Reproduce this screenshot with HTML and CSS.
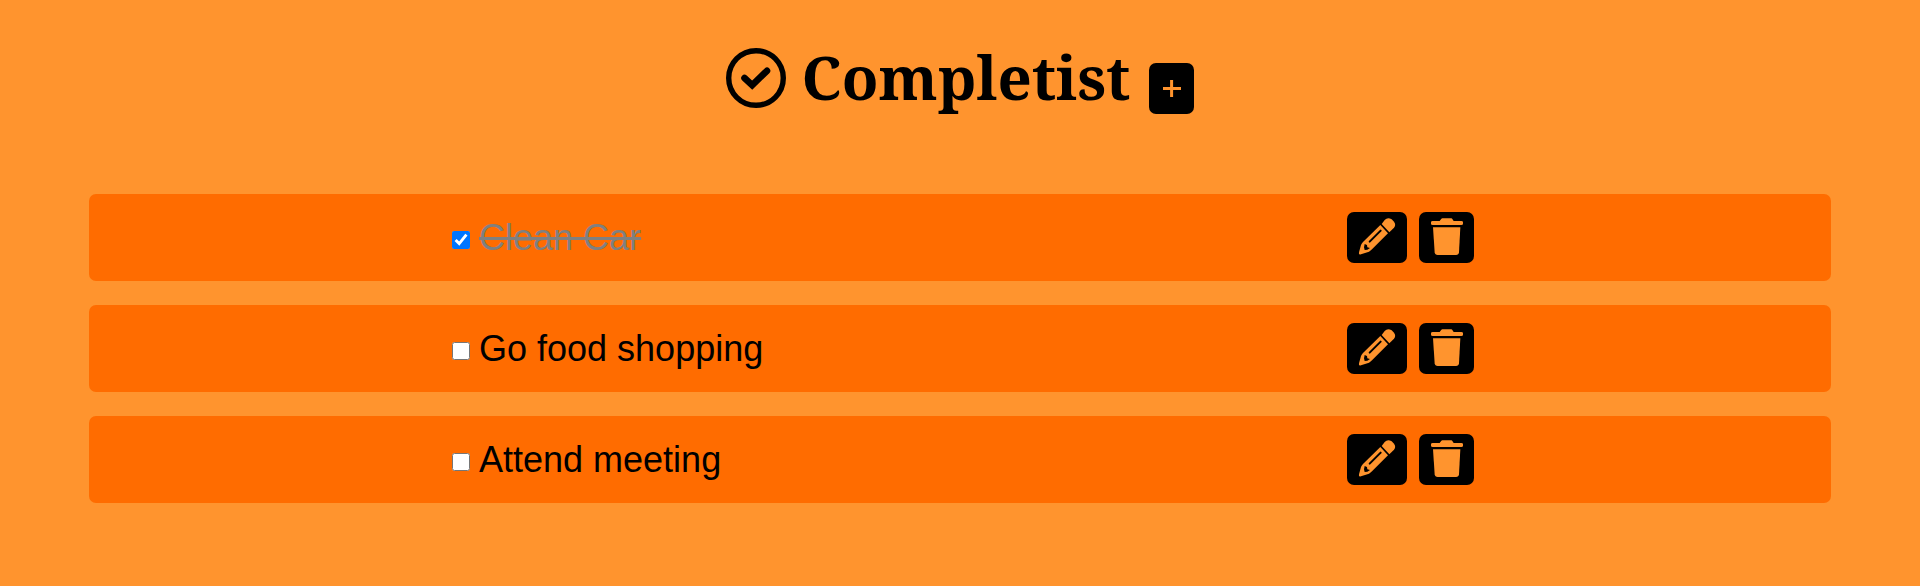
FILE: index.html
```html
<!DOCTYPE html>
<html lang="en">
<head>
<meta charset="utf-8">
<title>Completist</title>
<link rel="stylesheet" href="styles.css">
</head>
<body>
<svg class="defs" width="0" height="0">
  <symbol id="pencil" viewBox="0 0 180 153">
    <path class="fill" d="M104 36 113 24Q122 14 134 22L141 29Q148 38 141 47L127 61Z"/>
    <path class="fill" d="M100 39 123 64 75 112Q71 116 66 119L42 127Q34 130 36 121L42 99Q44 94 48 90Z"/>
    <path class="slot" d="M101 56 68 89"/>
    <path class="cut" d="M53 96 60 99 61 106 69 108 61 113 53 114 51 106Z"/>
  </symbol>
  <symbol id="trash" viewBox="0 0 165 153">
    <path class="fill" d="M41 27H62L67 20Q68 19 70 19H97Q99 19 100 21L104 27H127Q132 27 132 31V35Q132 39 127 39H41Q36 39 36 35V31Q36 27 41 27Z"/>
    <path class="fill" d="M42 46H124L120 121Q119 129 111 129H56Q48 129 47 121Z"/>
  </symbol>
</svg>
<header class="header">
  <svg class="logo" viewBox="0 0 60 60">
    <circle cx="30" cy="30" r="27.3"/>
    <path d="M18.5 30 26.2 37.2 41 22.8"/>
  </svg>
  <h1 class="title">Completist</h1>
  <button class="btn add" aria-label="Add task"><svg viewBox="0 0 18 17"><path d="M8.6 0V17M0 8.5H18"/></svg></button>
</header>
<main class="list">
  <div class="item">
    <label class="task done"><input type="checkbox" checked><span>Clean Car</span></label>
    <div class="actions">
      <button class="btn edit" aria-label="Edit"><svg><use href="#pencil"/></svg></button>
      <button class="btn delete" aria-label="Delete"><svg><use href="#trash"/></svg></button>
    </div>
  </div>
  <div class="item">
    <label class="task"><input type="checkbox"><span>Go food shopping</span></label>
    <div class="actions">
      <button class="btn edit" aria-label="Edit"><svg><use href="#pencil"/></svg></button>
      <button class="btn delete" aria-label="Delete"><svg><use href="#trash"/></svg></button>
    </div>
  </div>
  <div class="item">
    <label class="task"><input type="checkbox"><span>Attend meeting</span></label>
    <div class="actions">
      <button class="btn edit" aria-label="Edit"><svg><use href="#pencil"/></svg></button>
      <button class="btn delete" aria-label="Delete"><svg><use href="#trash"/></svg></button>
    </div>
  </div>
</main>
</body>
</html>
```
FILE: styles.css
```css
* { box-sizing: border-box; }
body {
  margin: 0;
  background: #ff942e;
  color: #000;
  font-family: "Liberation Sans", Arial, sans-serif;
}
.defs { display: block; }
.header {
  display: flex;
  align-items: flex-start;
  height: 194px;
  padding: 47px 0 0 726px;
}
.logo { width: 60px; height: 60px; margin-top: .5px; flex: none; }
.logo circle { fill: none; stroke: #000; stroke-width: 5.4; }
.logo path { fill: none; stroke: #000; stroke-width: 6.6; stroke-linecap: round; }
.title {
  width: 347.5px;
  margin: -11px 0 0 15.5px;
  font: bold 60px/82px "Noto Serif", "Droid Serif", "DejaVu Serif", serif;
  white-space: nowrap;
}
.btn {
  display: flex;
  align-items: center;
  justify-content: center;
  height: 51px;
  padding: 0;
  border: 0;
  border-radius: 7px;
  background: #000;
}
.btn svg { display: block; width: 100%; height: 100%; }
.add { width: 45px; margin-top: 16px; padding: 0 0 1px 1px; }
.add svg { width: 18px; height: 17px; }
.add path { stroke: #ff942e; stroke-width: 3; }
.list {
  display: flex;
  flex-direction: column;
  gap: 24px;
  padding: 0 89px;
}
.item {
  display: flex;
  align-items: flex-start;
  justify-content: space-between;
  height: 87px;
  padding: 18px 357px 0 363px;
  border-radius: 7px;
  background: #ff6c00;
}
.task { display: flex; align-items: flex-start; font-size: 36px; line-height: 51px; }
.task input { width: 18px; height: 18px; margin: 19px 9px 0 0; }
.done span { color: gray; text-decoration: line-through; }
.actions { display: flex; gap: 12px; }
.edit { width: 60px; }
.delete { width: 55px; }
.fill { fill: #ff942e; }
.cut { fill: #000; }
.slot { fill: none; stroke: #000; stroke-width: 6; stroke-linecap: round; }
```
